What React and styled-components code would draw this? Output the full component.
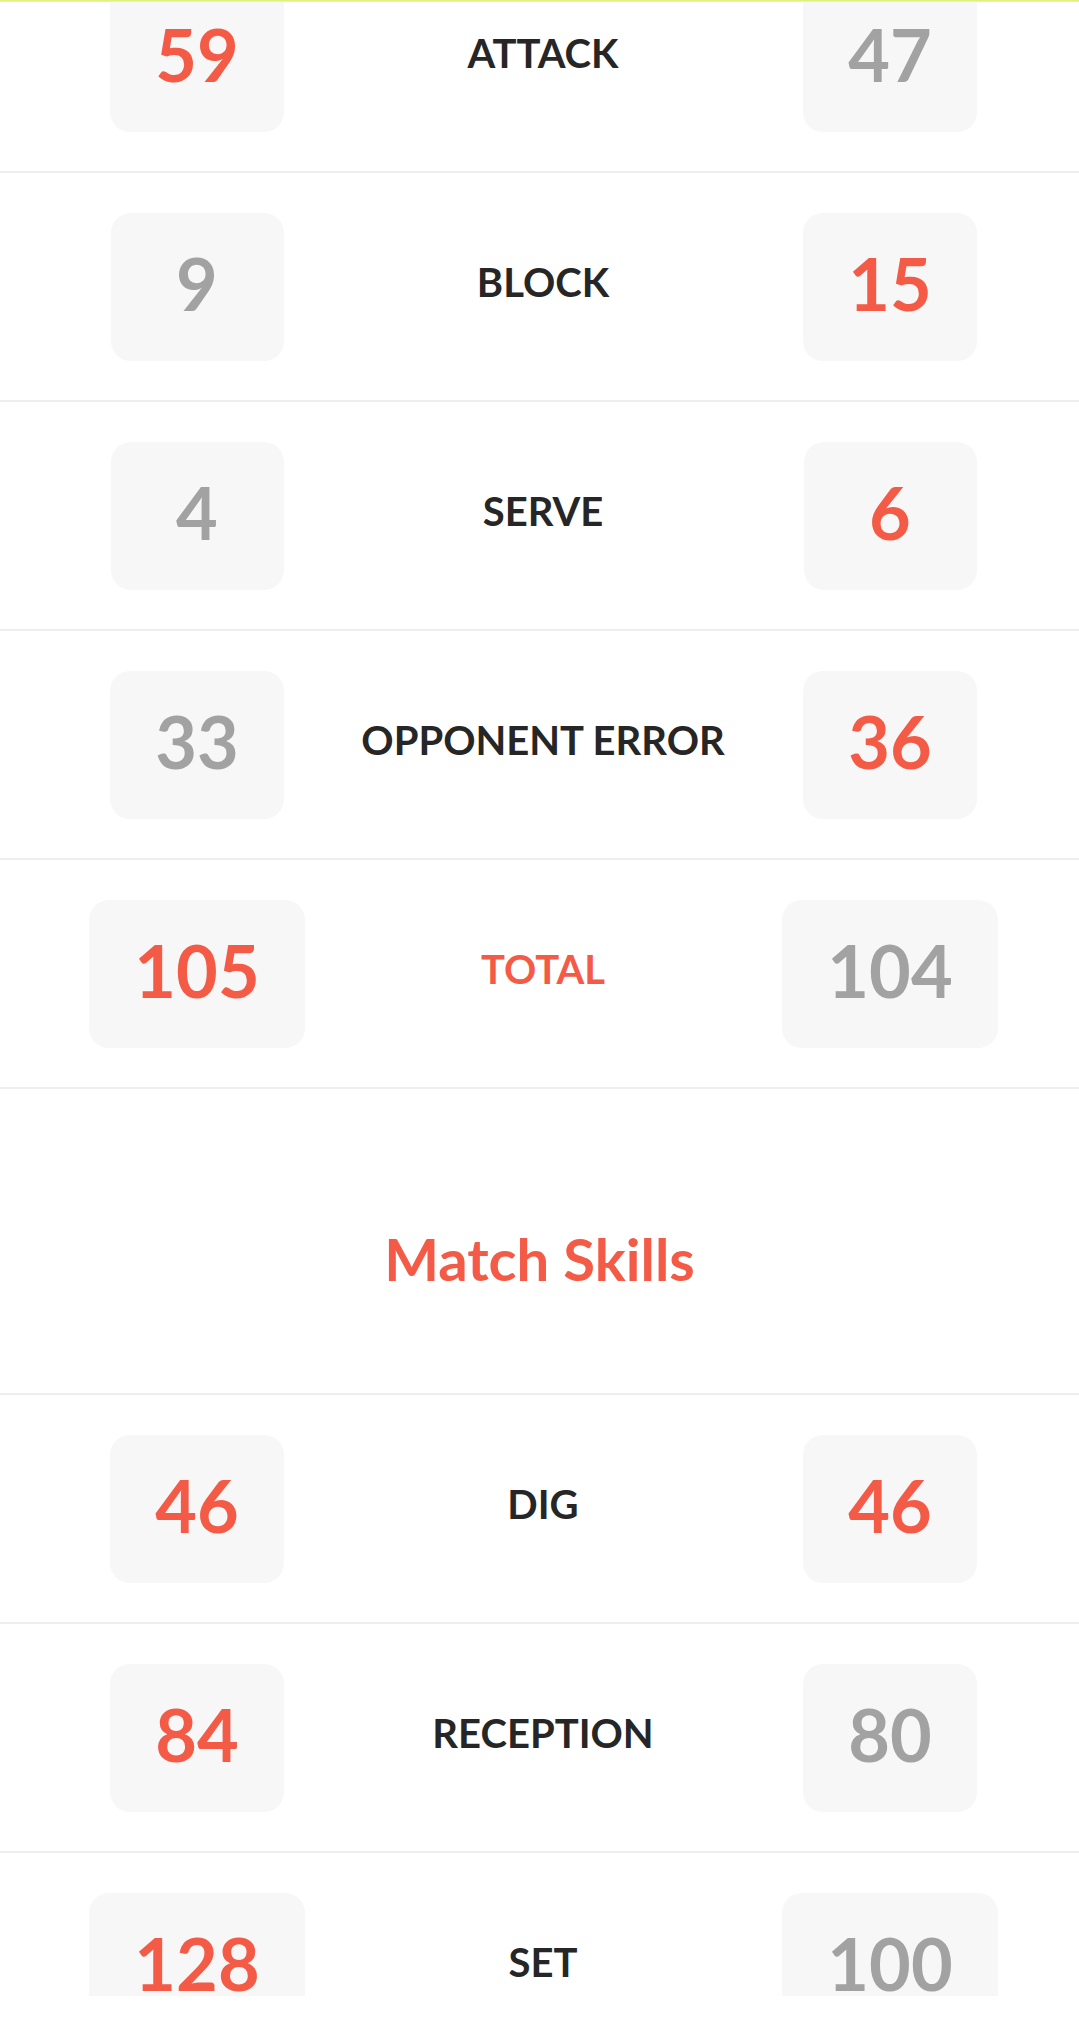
import React from 'react';
import styled, { createGlobalStyle } from 'styled-components';

const GlobalStyle = createGlobalStyle`
  html, body {
    margin: 0;
    padding: 0;
    background: #ffffff;
  }
  body {
    font-family: Lato, "Noto Sans", sans-serif;
  }
`;

const RED = '#f45b47';
const GREY = '#a2a2a2';

const Page = styled.div`
  position: relative;
  width: 1079px;
  height: 2028px;
  overflow: hidden;
  background: #fff;
`;

const TopBar = styled.div`
  position: absolute;
  top: 0;
  left: 0;
  right: 0;
  height: 2px;
  background: linear-gradient(#dcee6a, #eef7b4);
  z-index: 2;
`;

const Viewport = styled.div`
  height: 1996px;
  overflow: hidden;
`;

const List = styled.div`
  margin-top: -56px;
`;

const Row = styled.div`
  display: grid;
  grid-template-columns: 376px 316px 378px;
  align-items: center;
  padding: 40px 0 39px 9px;
  border-bottom: 2px solid #eeeeee;
`;

const Cell = styled.div`
  display: flex;
  justify-content: center;
  min-width: 0;
`;

const ScoreBox = styled.div`
  min-width: 173px;
  height: 148px;
  box-sizing: border-box;
  padding: 0 45px 8px;
  border-radius: 20px;
  background: #f7f7f7;
  display: flex;
  align-items: center;
  justify-content: center;
  font-size: 72px;
  font-weight: 700;
  color: ${(p) => (p.$win ? RED : GREY)};
`;

const Label = styled.span`
  flex-shrink: 0;
  font-size: 40px;
  font-weight: 700;
  padding-bottom: 10px;
  white-space: nowrap;
  color: ${(p) => (p.$accent ? RED : '#262626')};
`;

const SectionTitle = styled.h2`
  margin: 0;
  padding: 135px 0 99px;
  text-align: center;
  font-size: 58px;
  line-height: 70px;
  font-weight: 700;
  color: ${RED};
  border-bottom: 2px solid #eeeeee;
`;

const pointStats = [
  { label: 'ATTACK', home: 59, away: 47 },
  { label: 'BLOCK', home: 9, away: 15 },
  { label: 'SERVE', home: 4, away: 6 },
  { label: 'OPPONENT ERROR', home: 33, away: 36 },
  { label: 'TOTAL', home: 105, away: 104, accent: true },
];

const skillStats = [
  { label: 'DIG', home: 46, away: 46 },
  { label: 'RECEPTION', home: 84, away: 80 },
  { label: 'SET', home: 128, away: 100 },
];

function StatRow({ label, home, away, accent }) {
  return (
    <Row>
      <Cell>
        <ScoreBox $win={home >= away}>{home}</ScoreBox>
      </Cell>
      <Cell>
        <Label $accent={accent}>{label}</Label>
      </Cell>
      <Cell>
        <ScoreBox $win={away >= home}>{away}</ScoreBox>
      </Cell>
    </Row>
  );
}

export default function App() {
  return (
    <Page>
      <GlobalStyle />
      <TopBar />
      <Viewport>
        <List>
          {pointStats.map((s) => (
            <StatRow key={s.label} {...s} />
          ))}
          <SectionTitle>Match Skills</SectionTitle>
          {skillStats.map((s) => (
            <StatRow key={s.label} {...s} />
          ))}
        </List>
      </Viewport>
    </Page>
  );
}
